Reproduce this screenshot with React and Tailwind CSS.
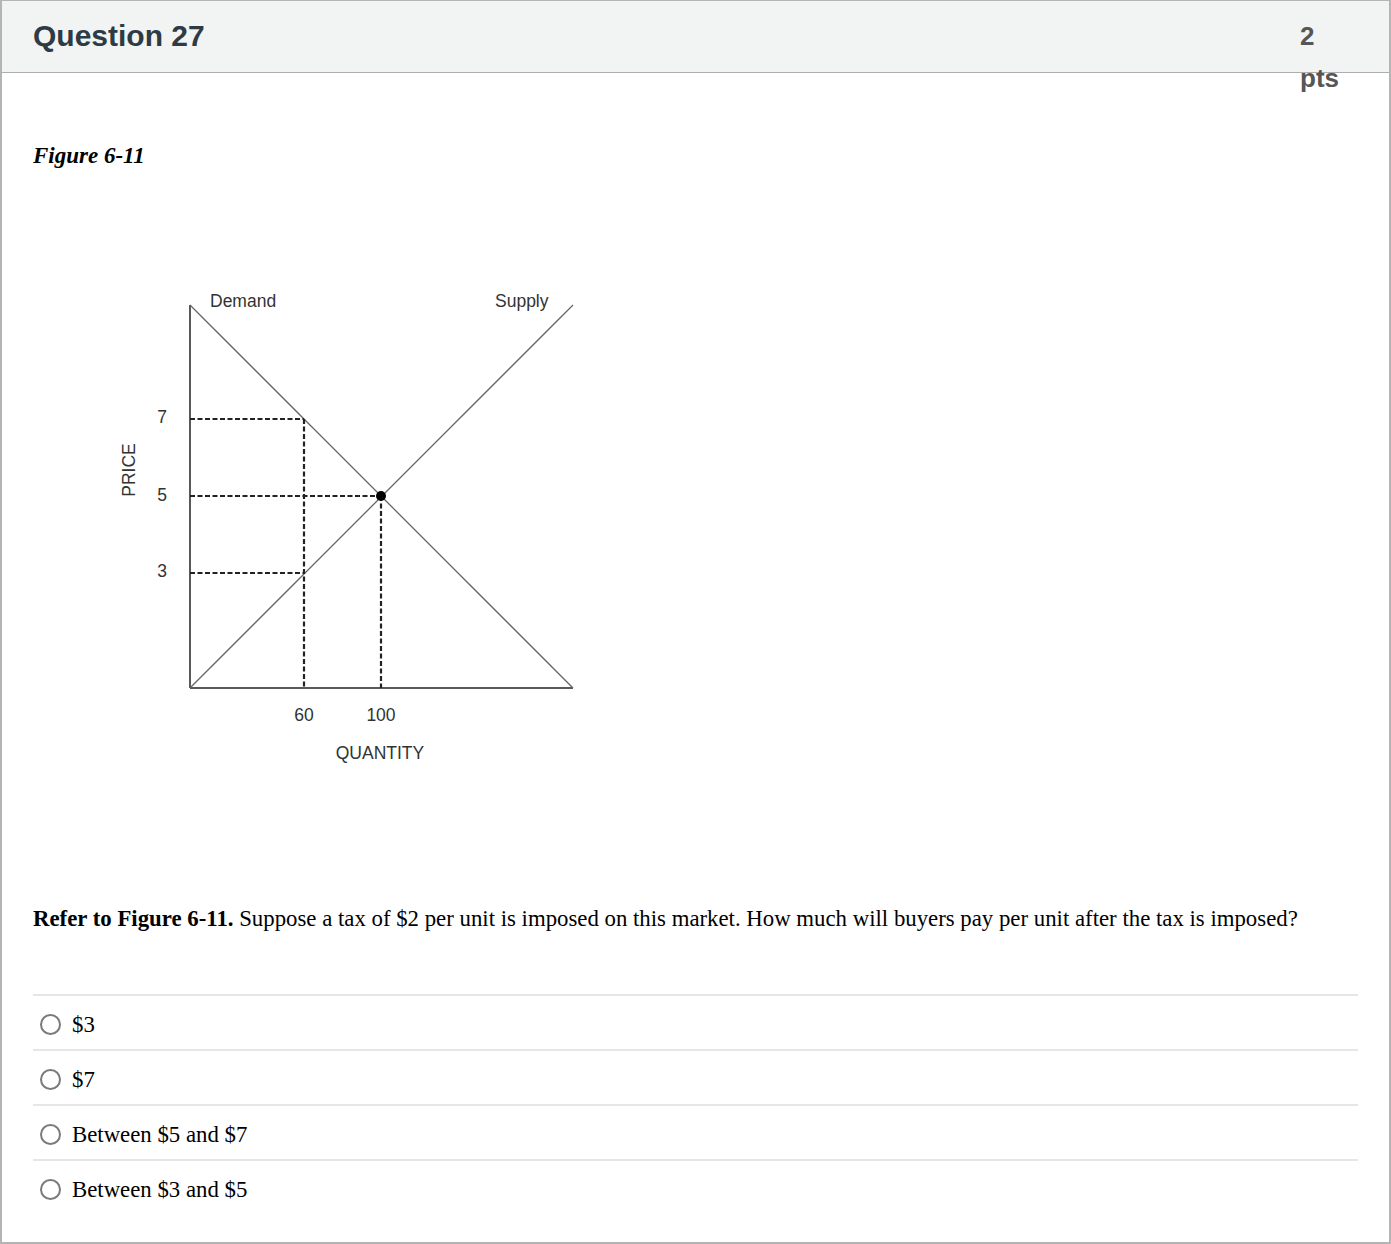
import React from "react";

const answers = ["$3", "$7", "Between $5 and $7", "Between $3 and $5"];

// chart coordinates are relative to the svg's top-left
const ox = 157;
const oy = 408;
const top = 25;
const right = 540;
const font = "'Liberation Sans', Arial, sans-serif";

const Label = ({ children, ...props }) => (
  <text fontFamily={font} fontSize="17.5" fill="#333" {...props}>
    {children}
  </text>
);

const Chart = () => {
  const y7 = 139;
  const y5 = 216;
  const y3 = 293;
  const x60 = 271;
  const x100 = 348;

  return (
    <svg width="600" height="500" className="block">
      {/* axes */}
      <line x1={ox} y1={top} x2={ox} y2={oy} stroke="#222" strokeWidth="1.5" />
      <line x1={ox} y1={oy} x2={right} y2={oy} stroke="#222" strokeWidth="1.5" />
      {/* demand + supply */}
      <line x1={ox} y1={top} x2={right} y2={oy} stroke="#666" strokeWidth="1.3" />
      <line x1={ox} y1={oy} x2={right} y2={top} stroke="#666" strokeWidth="1.3" />
      {/* dashed guides */}
      <g stroke="#222" strokeWidth="2.2" strokeDasharray="5 2.5">
        <line x1={ox} y1={y7} x2={x60} y2={y7} />
        <line x1={x60} y1={y7} x2={x60} y2={oy} />
        <line x1={ox} y1={y5} x2={x100} y2={y5} />
        <line x1={x100} y1={y5} x2={x100} y2={oy} />
        <line x1={ox} y1={y3} x2={x60} y2={y3} />
      </g>
      <circle cx={x100} cy={y5} r="5" fill="#000" />

      <Label x="177" y="27">Demand</Label>
      <Label x="462" y="27">Supply</Label>

      <Label x="129" y="143" textAnchor="middle">7</Label>
      <Label x="129" y="221" textAnchor="middle">5</Label>
      <Label x="129" y="297" textAnchor="middle">3</Label>
      <Label x="102" y="190" textAnchor="middle" transform="rotate(-90 102 190)">
        PRICE
      </Label>

      <Label x={x60} y="441" textAnchor="middle">60</Label>
      <Label x={x100} y="441" textAnchor="middle">100</Label>
      <Label x="347" y="479" textAnchor="middle">QUANTITY</Label>
    </svg>
  );
};

const App = () => {
  return (
    <div className="w-[1391px] h-[1244px] bg-white">
      <div className="w-[1391px] h-[1244px] border-2 border-t border-[#b4b4b4] flex flex-col">
        <header className="h-[72px] shrink-0 bg-[#f2f3f3] border-b border-[#adadad] flex justify-between pl-[31px]">
          <h2 className="font-['Liberation_Sans',Arial,sans-serif] font-bold text-[30px] leading-[70px] text-[#2d3b45]">
            Question 27
          </h2>
          <div className="w-[42px] mr-[47px] pt-[14px] font-['Liberation_Sans',Arial,sans-serif] font-bold text-[26px] leading-[42px] text-[#565656]">
            2 pts
          </div>
        </header>

        <div className="px-[31px] font-['Liberation_Serif','Times_New_Roman',serif] text-black">
          <p className="mt-[66px] text-[23px] leading-[33px] font-bold italic">Figure 6-11</p>

          <div className="mt-[108px]">
            <Chart />
          </div>

          <p className="mt-[124px] text-[22.8px] leading-[30px]">
            <strong>Refer to Figure 6-11.</strong> Suppose a tax of $2 per unit is imposed on this
            market. How much will buyers pay per unit after the tax is imposed?
          </p>

          <ul className="mt-[60px]">
            {answers.map((answer) => (
              <li
                key={answer}
                className="h-[55px] border-t-2 border-[#e6e6e6] flex items-center pt-[4px] pl-[7px]"
              >
                <span className="w-[21px] h-[21px] rounded-full border-2 border-[#7a7a7a] bg-white mr-[11px]" />
                <span className="text-[22.8px] leading-[30px]">{answer}</span>
              </li>
            ))}
          </ul>
        </div>
      </div>
    </div>
  );
};

export default App;
